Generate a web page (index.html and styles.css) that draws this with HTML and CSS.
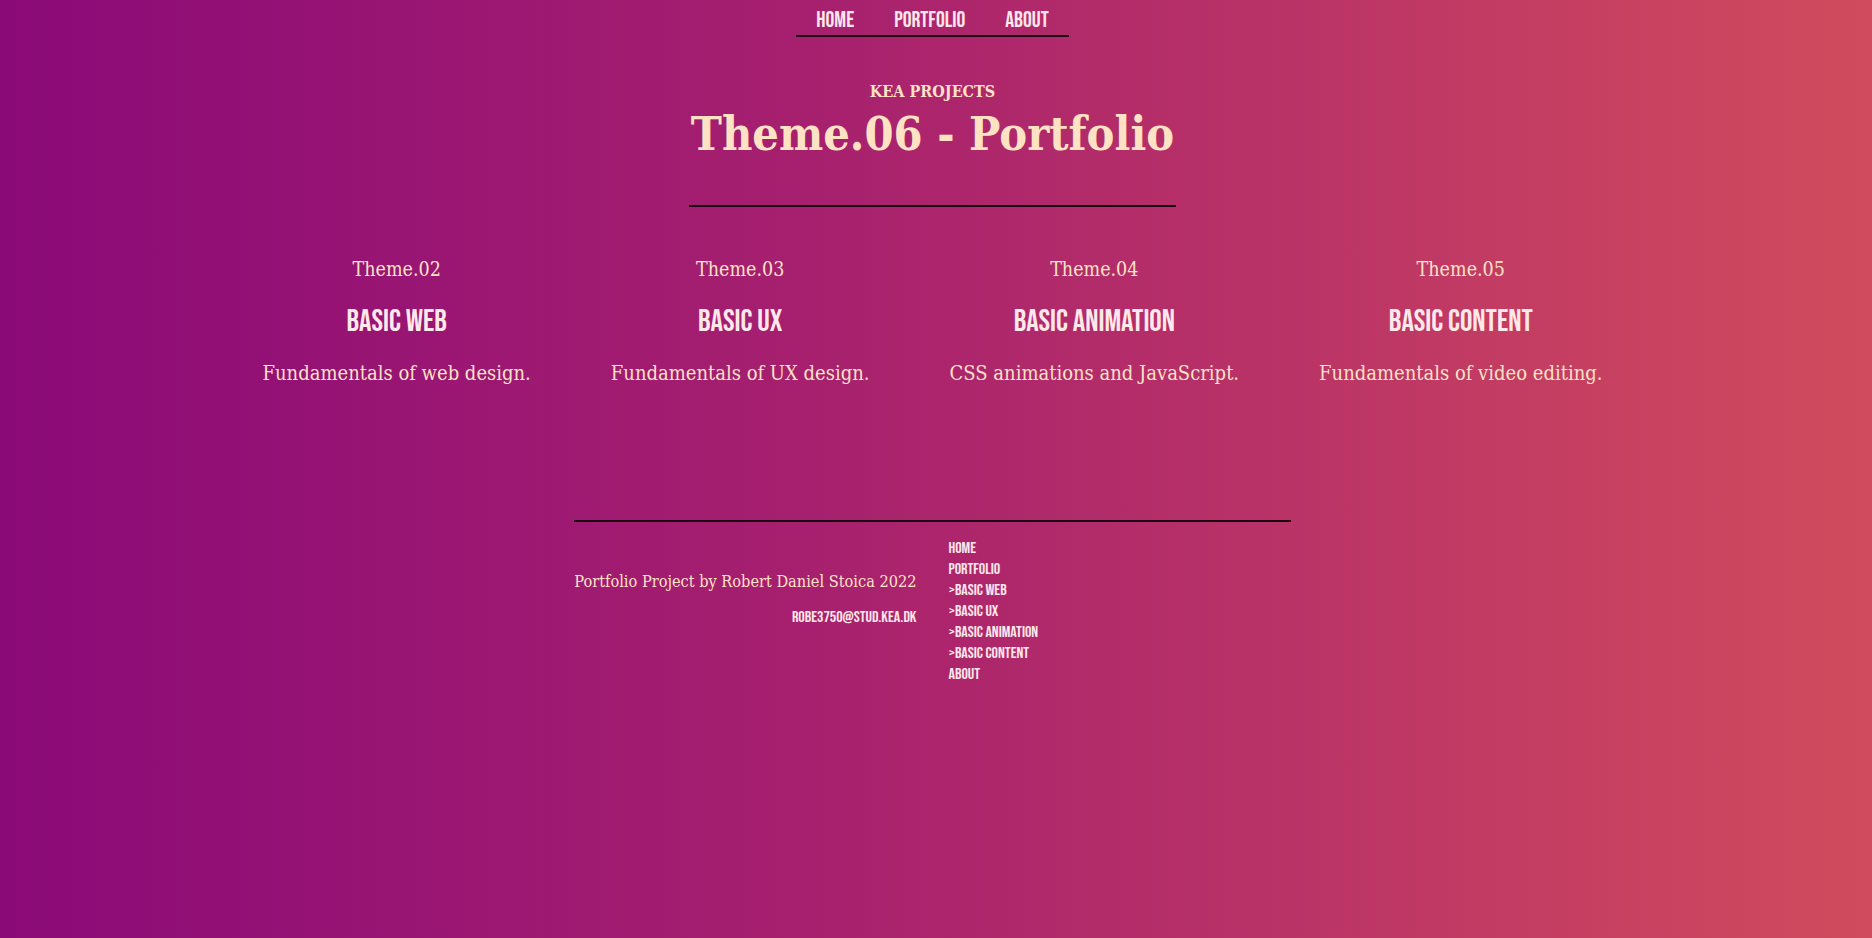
FILE: index.html
```html
<!DOCTYPE html>
<html lang="en">
<head>
<meta charset="utf-8">
<title>Theme.06 - Portfolio</title>
<link rel="stylesheet" href="styles.css">
</head>
<body>
<nav class="topnav">
  <ul class="topnav-list">
    <li><a href="#" class="topnav-link">HOME</a></li>
    <li><a href="#" class="topnav-link">PORTFOLIO</a></li>
    <li><a href="#" class="topnav-link">ABOUT</a></li>
  </ul>
</nav>
<header class="hero">
  <div class="hero-inner">
    <p class="hero-kicker">KEA PROJECTS</p>
    <h1 class="hero-title">Theme.06 - Portfolio</h1>
  </div>
</header>
<main class="themes">
  <article class="theme">
    <p class="theme-num">Theme.02</p>
    <h2 class="theme-title">BASIC WEB</h2>
    <p class="theme-desc">Fundamentals of web design.</p>
  </article>
  <article class="theme">
    <p class="theme-num">Theme.03</p>
    <h2 class="theme-title">BASIC UX</h2>
    <p class="theme-desc">Fundamentals of UX design.</p>
  </article>
  <article class="theme">
    <p class="theme-num">Theme.04</p>
    <h2 class="theme-title">BASIC ANIMATION</h2>
    <p class="theme-desc">CSS animations and JavaScript.</p>
  </article>
  <article class="theme">
    <p class="theme-num">Theme.05</p>
    <h2 class="theme-title">BASIC CONTENT</h2>
    <p class="theme-desc">Fundamentals of video editing.</p>
  </article>
</main>
<footer class="footer">
  <div class="footer-info">
    <p class="footer-credit">Portfolio Project by Robert Daniel Stoica 2022</p>
    <p class="footer-mail">ROBE3750@STUD.KEA.DK</p>
  </div>
  <ul class="footer-nav">
    <li>HOME</li>
    <li>PORTFOLIO</li>
    <li>&gt;BASIC WEB</li>
    <li>&gt;BASIC UX</li>
    <li>&gt;BASIC ANIMATION</li>
    <li>&gt;BASIC CONTENT</li>
    <li>ABOUT</li>
  </ul>
</footer>
</body>
</html>
```

FILE: styles.css
```css
html, body {
  margin: 0;
  padding: 0;
}
body {
  min-height: 938px;
  background: linear-gradient(to right, #8a0a78 0%, #a8216e 45%, #d14b5d 100%);
  color: #fde2c4;
  font-family: "DejaVu Serif Condensed", "DejaVu Serif", serif;
  padding-right: 7px;
  box-sizing: border-box;
}
p, h1, h2, ul {
  margin: 0;
  padding: 0;
}
ul {
  list-style: none;
}
.topnav-link,
.theme-title,
.footer-mail,
.footer-nav li {
  font-family: "Bebas Neue", "Oswald", "Roboto Condensed", "DejaVu Sans Condensed", sans-serif;
  font-weight: 400;
}
.topnav {
  display: flex;
  justify-content: center;
}
.topnav-list {
  display: flex;
  border-bottom: 2px solid #1a0012;
}
.topnav-link {
  display: block;
  padding: 8px 20px 2px;
  color: #ffe6ea;
  text-decoration: none;
  font-size: 22px;
  line-height: 25px;
}
.hero {
  display: flex;
  justify-content: center;
  margin-top: 46px;
}
.hero-inner {
  border-bottom: 2px solid #1a0012;
  text-align: center;
  padding-bottom: 41px;
}
.hero-kicker {
  font-weight: 700;
  font-size: 16px;
  line-height: 18px;
}
.hero-title {
  font-weight: 700;
  font-size: 46.5px;
  line-height: 60px;
  margin-top: 3px;
  padding: 0 2px;
}
.themes {
  display: flex;
  justify-content: center;
  gap: 80px;
  margin-top: 51px;
}
.theme {
  text-align: center;
}
.theme-num {
  font-size: 19.5px;
  line-height: 24px;
}
.theme-title {
  margin-top: 23px;
  color: #ffe8ea;
  font-size: 31px;
  line-height: 34px;
}
.theme-desc {
  margin-top: 21px;
  font-size: 20px;
  line-height: 26px;
}
.footer {
  width: 717px;
  margin: 134px auto 0;
  border-top: 2px solid #1a0012;
  display: grid;
  grid-template-columns: 1fr 1fr;
  column-gap: 32px;
  padding-top: 16px;
}
.footer-info {
  text-align: right;
  padding-top: 33px;
}
.footer-credit {
  font-size: 16.2px;
  line-height: 22px;
}
.footer-mail {
  margin-top: 16px;
  color: #ffe8ea;
  font-size: 16px;
  line-height: 18px;
}
.footer-nav li {
  color: #ffe8ea;
  font-size: 16px;
  line-height: 21px;
}
```
